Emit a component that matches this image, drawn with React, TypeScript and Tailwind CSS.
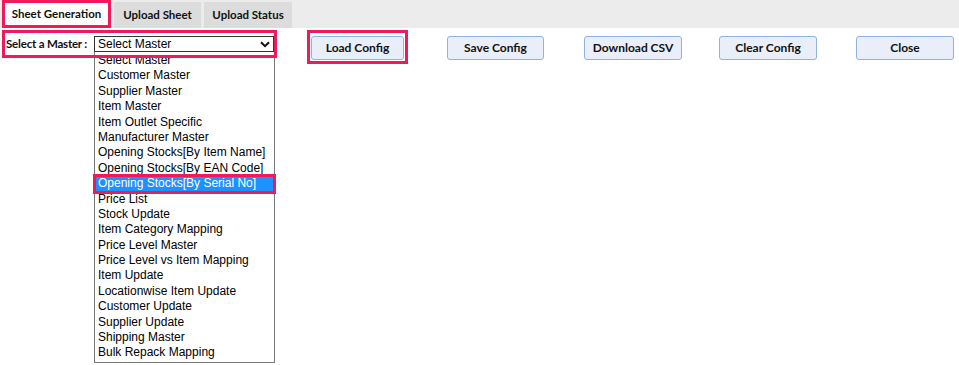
import React from "react";

const masters = [
  "Select Master",
  "Customer Master",
  "Supplier Master",
  "Item Master",
  "Item Outlet Specific",
  "Manufacturer Master",
  "Opening Stocks[By Item Name]",
  "Opening Stocks[By EAN Code]",
  "Opening Stocks[By Serial No]",
  "Price List",
  "Stock Update",
  "Item Category Mapping",
  "Price Level Master",
  "Price Level vs Item Mapping",
  "Item Update",
  "Locationwise Item Update",
  "Customer Update",
  "Supplier Update",
  "Shipping Master",
  "Bulk Repack Mapping",
];

const buttons = [
  { label: "Load Config", cls: "ml-[30px] w-[93px]" },
  { label: "Save Config", cls: "ml-[39px] w-[97px]" },
  { label: "Download CSV", cls: "ml-[40px] w-[98px]" },
  { label: "Clear Config", cls: "ml-[37px] w-[98px]" },
  { label: "Close", cls: "ml-[39px] w-[98px]" },
];

function ConfigButton({ label, cls, marked }: { label: string; cls: string; marked?: boolean }) {
  const btn = (
    <button
      className={`h-[24px] rounded-[3px] border border-[#8fb3e3] bg-[#e9eef8] text-[12px] font-bold text-[#111] ${
        marked ? "w-[93px]" : "w-full"
      }`}
    >
      {label}
    </button>
  );
  if (!marked) return <div className={`py-[4px] ${cls}`}>{btn}</div>;
  return <div className="ml-[30px] border-[3px] border-[#ef1a5a] p-[1px]">{btn}</div>;
}

export default function App() {
  return (
    <div className="relative h-[365px] w-[959px] bg-white font-['Lato',sans-serif]">
      <div className="flex h-[28px] items-end gap-[3px] bg-[#ececec] pl-[2px]">
        <div className="flex h-[28px] w-[109px] items-center justify-center whitespace-nowrap border-[3px] border-[#ef1a5a] bg-white text-[11.5px] font-bold text-[#111]">
          Sheet Generation
        </div>
        <div className="flex h-[26px] w-[87px] items-center justify-center whitespace-nowrap bg-[#dcdcdc] text-[11.5px] font-bold text-[#111]">
          Upload Sheet
        </div>
        <div className="flex h-[26px] w-[88px] items-center justify-center whitespace-nowrap bg-[#dcdcdc] text-[11.5px] font-bold text-[#111]">
          Upload Status
        </div>
      </div>

      <div className="mt-[2px] flex items-start">
        <div className="relative z-10 ml-[2px] flex h-[28px] w-[275px] items-center border-[3px] border-[#ef1a5a] pl-[1px]">
          <span className="w-[88px] whitespace-nowrap text-[11.5px] font-bold tracking-[-0.2px] text-[#111]">
            Select a Master :
          </span>
          <div className="flex h-[16px] w-[180px] items-center justify-between border border-[#333] bg-white pl-[3px] pr-[3px] font-['Liberation_Sans',Arial,sans-serif] text-[12px] text-black">
            <span className="leading-none">Select Master</span>
            <svg width="10" height="7" viewBox="0 0 10 7">
              <path d="M1 1.2 5 5.2 9 1.2" fill="none" stroke="#111" strokeWidth="2" />
            </svg>
          </div>
        </div>

        {buttons.map((b, i) => (
          <ConfigButton key={b.label} label={b.label} cls={b.cls} marked={i === 0} />
        ))}
      </div>

      <div className="absolute left-[94px] top-[51px] w-[181px] border border-[#777] bg-white py-[1px] font-['Liberation_Sans',Arial,sans-serif] text-[12px] text-black">
        {masters.map((m, i) =>
          i === 8 ? (
            <div key={m} className="relative z-10 -mx-[2px] -my-[2px] border-[3px] border-[#ef1a5a]">
              <div className="h-[13.4px] whitespace-nowrap bg-[#1e90ff] pl-[2px] leading-[13.4px] text-white">{m}</div>
            </div>
          ) : (
            <div key={m} className="h-[15.4px] whitespace-nowrap pl-[3px] leading-[15.4px]">
              {m}
            </div>
          )
        )}
      </div>
    </div>
  );
}
